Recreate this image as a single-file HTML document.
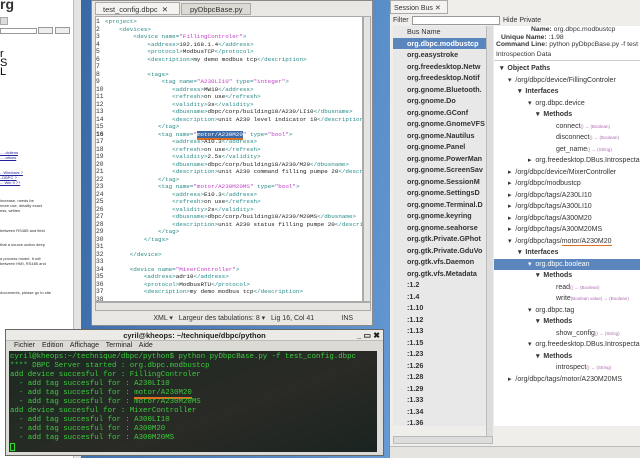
<!DOCTYPE html>
<html><head><meta charset="utf-8"><style>
*{margin:0;padding:0;box-sizing:border-box}
body{width:640px;height:458px;overflow:hidden;position:relative;background:#3a6ea8;font-family:"Liberation Sans",sans-serif;}
.abs{position:absolute}
.desk{left:0;top:0;width:640px;height:458px;background:linear-gradient(100deg,#2d5f9c 0%,#5f94cf 60%,#9ec3ea 100%)}
.browser{left:0;top:0;width:73px;height:458px;background:#fff;font-size:4px;color:#333;overflow:hidden}
.bscroll{left:73px;top:0;width:8px;height:458px;background:#e4e4e4;border-left:1px solid #bbb}
.ed{left:91px;top:0;width:282px;height:326px;background:#e9e7e3;border:1px solid #8a8a8a}
.code{left:95px;top:16px;width:268px;height:286px;background:#fff;border:1px solid #aaa;font-family:"Liberation Mono",monospace;font-size:5.9px;line-height:7.5px;overflow:hidden;white-space:pre;color:#222;padding-top:1px}
.ln{display:inline-block;width:9px;color:#333;font-size:6.3px}
.t{color:#2a8a8a}.s{color:#c23fc8}
.term{left:5px;top:329px;width:379px;height:127px;background:#dcdad5;border:1px solid #666}
.tc{left:9px;top:351px;width:369px;height:101px;background:linear-gradient(160deg,#1c2a22,#2a2a26 60%,#1a2420);font-family:"Liberation Mono",monospace;font-size:7.4px;line-height:9px;color:#3ccc3c;white-space:pre;overflow:hidden;padding:2px 0 0 1px}
.sb{left:389px;top:0;width:251px;height:458px;background:#efeeeb;border-left:1px solid #888}
.list{left:393px;top:26px;width:96px;height:400px;background:#e8e8e8;font-size:7.2px;font-weight:bold;line-height:11.5px;color:#333;overflow:hidden}
.list div{padding-left:14px;height:11.5px}
.rp{left:494px;top:26px;width:146px;height:400px;background:#fff;font-size:7px;line-height:11.5px;color:#333;white-space:nowrap;overflow:hidden}
.rp div{height:11.5px}
.sm{font-size:4.5px;color:#b06db0}
</style></head><body>
<div class="abs desk"></div>
<div class="abs browser">
<div style="font-size:14px;font-weight:bold;position:absolute;left:0;top:-4px">rg</div>
<div style="position:absolute;left:0;top:17px;width:8px;height:8px;background:#ddd;border:1px solid #aaa"></div>
<div style="position:absolute;left:0;top:28px;width:37px;height:6px;border:1px solid #999"></div>
<div style="position:absolute;left:38px;top:27px;width:15px;height:7px;border:1px solid #999;background:#eee"></div>
<div style="position:absolute;left:55px;top:27px;width:15px;height:7px;border:1px solid #999;background:#eee"></div>
<div style="position:absolute;left:0;top:50px;font-size:11px;line-height:9px;color:#000">r<br>S<br>L</div>
<div style="position:absolute;left:0;top:150px;color:#229;text-decoration:underline">.....dcliens<br>.....ations</div>
<div style="position:absolute;left:0;top:170px;color:#229;text-decoration:underline">.. Windows ?<br>..DBPC ?<br>... Win 9 ??</div>
<div style="position:absolute;left:0;top:198px">increase, needs be<br>more use, detailly exact<br>ess, written</div>
<div style="position:absolute;left:0;top:228px">between RS485 and field</div>
<div style="position:absolute;left:0;top:242px">that a source action deep</div>
<div style="position:absolute;left:0;top:256px">a process model. It will<br>between HMI, RS485 and</div>
<div style="position:absolute;left:0;top:290px">documents, please go to site</div>
</div>
<div class="abs bscroll"></div>
<div class="abs ed"></div>
<div class="abs" style="left:95px;top:2px;width:85px;height:13px;background:#f4f3f1;border:1px solid #aaa;font-size:7.5px;padding:2px 0 0 7px;color:#333">test_config.dbpc &nbsp;✕</div>
<div class="abs" style="left:181px;top:3px;width:70px;height:12px;background:#dcdad5;border:1px solid #aaa;font-size:7.5px;padding:1px 0 0 8px;color:#333">pyDbpcBase.py &nbsp;✕</div>
<div class="abs" style="left:96px;top:131px;width:266px;height:8px;background:#eeeeee"></div>
<div class="abs code"><span class="ln">1</span><span class="t">&lt;project&gt;</span>
<span class="ln">2</span>    <span class="t">&lt;devices&gt;</span>
<span class="ln">3</span>        <span class="t">&lt;device name=</span><span class="s">"FillingControler"</span><span class="t">&gt;</span>
<span class="ln">4</span>            <span class="t">&lt;address&gt;</span>192.168.1.4<span class="t">&lt;/address&gt;</span>
<span class="ln">5</span>            <span class="t">&lt;protocol&gt;</span>ModbusTCP<span class="t">&lt;/protocol&gt;</span>
<span class="ln">6</span>            <span class="t">&lt;description&gt;</span>my demo modbus tcp<span class="t">&lt;/description&gt;</span>
<span class="ln">7</span>
<span class="ln">8</span>            <span class="t">&lt;tags&gt;</span>
<span class="ln">9</span>                <span class="t">&lt;tag name=</span><span class="s">"A230LI10"</span> <span class="t">type=</span><span class="s">"integer"</span><span class="t">&gt;</span>
<span class="ln">10</span>                   <span class="t">&lt;address&gt;</span>MW10<span class="t">&lt;/address&gt;</span>
<span class="ln">11</span>                   <span class="t">&lt;refresh&gt;</span>on use<span class="t">&lt;/refresh&gt;</span>
<span class="ln">12</span>                   <span class="t">&lt;validity&gt;</span>3s<span class="t">&lt;/validity&gt;</span>
<span class="ln">13</span>                   <span class="t">&lt;dbusname&gt;</span>dbpc/corp/building18/A230/LI10<span class="t">&lt;/dbusname&gt;</span>
<span class="ln">14</span>                   <span class="t">&lt;description&gt;</span>unit A230 level indicator 10<span class="t">&lt;/description&gt;</span>
<span class="ln">15</span>               <span class="t">&lt;/tag&gt;</span>
<span class="ln"><b>16</b></span>               <span class="t">&lt;tag name=</span><span class="s">"<span style="background:#3a6aa8;color:#fff;border-bottom:2px solid #e07020">motor/A230M20</span>"</span> <span class="t">type=</span><span class="s">"bool"</span><span class="t">&gt;</span>
<span class="ln">17</span>                   <span class="t">&lt;address&gt;</span>A10.3<span class="t">&lt;/address&gt;</span>
<span class="ln">18</span>                   <span class="t">&lt;refresh&gt;</span>on use<span class="t">&lt;/refresh&gt;</span>
<span class="ln">19</span>                   <span class="t">&lt;validity&gt;</span>2.5s<span class="t">&lt;/validity&gt;</span>
<span class="ln">20</span>                   <span class="t">&lt;dbusname&gt;</span>dbpc/corp/building18/A230/M20<span class="t">&lt;/dbusname&gt;</span>
<span class="ln">21</span>                   <span class="t">&lt;description&gt;</span>unit A230 command filling pumpe 20<span class="t">&lt;/description&gt;</span>
<span class="ln">22</span>               <span class="t">&lt;/tag&gt;</span>
<span class="ln">23</span>               <span class="t">&lt;tag name=</span><span class="s">"motor/A230M20MS"</span> <span class="t">type=</span><span class="s">"bool"</span><span class="t">&gt;</span>
<span class="ln">24</span>                   <span class="t">&lt;address&gt;</span>E10.3<span class="t">&lt;/address&gt;</span>
<span class="ln">25</span>                   <span class="t">&lt;refresh&gt;</span>on use<span class="t">&lt;/refresh&gt;</span>
<span class="ln">26</span>                   <span class="t">&lt;validity&gt;</span>2s<span class="t">&lt;/validity&gt;</span>
<span class="ln">27</span>                   <span class="t">&lt;dbusname&gt;</span>dbpc/corp/building18/A230/M20MS<span class="t">&lt;/dbusname&gt;</span>
<span class="ln">28</span>                   <span class="t">&lt;description&gt;</span>unit A230 status filling pumpe 20<span class="t">&lt;/description&gt;</span>
<span class="ln">29</span>               <span class="t">&lt;/tag&gt;</span>
<span class="ln">30</span>           <span class="t">&lt;/tags&gt;</span>
<span class="ln">31</span>
<span class="ln">32</span>       <span class="t">&lt;/device&gt;</span>
<span class="ln">33</span>
<span class="ln">34</span>       <span class="t">&lt;device name=</span><span class="s">"MixerController"</span><span class="t">&gt;</span>
<span class="ln">35</span>           <span class="t">&lt;address&gt;</span>adr10<span class="t">&lt;/address&gt;</span>
<span class="ln">36</span>           <span class="t">&lt;protocol&gt;</span>ModbusRTU<span class="t">&lt;/protocol&gt;</span>
<span class="ln">37</span>           <span class="t">&lt;description&gt;</span>my demo modbus tcp<span class="t">&lt;/description&gt;</span>
<span class="ln">38</span></div>
<div class="abs" style="left:363px;top:16px;width:8px;height:286px;background:#e6e4e0;border:1px solid #aaa"></div>
<div class="abs" style="left:95px;top:302px;width:276px;height:9px;background:#e6e4e0;border:1px solid #aaa"></div>
<div class="abs" style="left:95px;top:312px;width:276px;height:12px;font-size:7px;color:#333;padding-top:2px;white-space:pre">                              XML ▾   Largeur des tabulations: 8 ▾   Lig 16, Col 41              INS</div>

<div class="abs term"></div>
<div class="abs" style="left:6px;top:330px;width:377px;height:11px;background:#eceae6;border-bottom:1px solid #bbb;font-size:7.5px;font-weight:bold;text-align:center;color:#222;line-height:11px">cyril@kheops: ~/technique/dbpc/python<span style="position:absolute;right:3px;font-size:8px">_ ▭ ✖</span></div>
<div class="abs" style="left:6px;top:341px;width:377px;height:10px;font-size:7px;color:#222;line-height:10px;padding-left:8px;word-spacing:5px">Fichier Edition Affichage Terminal Aide</div>
<div class="abs tc">cyril@kheops:~/technique/dbpc/python$ python pyDbpcBase.py -f test_config.dbpc
**** DBPC Server started : org.dbpc.modbustcp
add device succesful for : FillingControler
  - add tag succesful for : A230LI10
  - add tag succesful for : <span style="border-bottom:2px solid #e07020">motor/A230M20</span>
  - add tag succesful for : motor/A230M20MS
add device succesful for : MixerController
  - add tag succesful for : A300LI10
  - add tag succesful for : A300M20
  - add tag succesful for : A300M20MS
<span style="display:inline-block;width:5px;height:8px;border:1px solid #3d3"></span></div>
<div class="abs" style="left:377px;top:351px;width:6px;height:101px;background:#ddd"></div>

<div class="abs sb"></div>
<div class="abs" style="left:390px;top:0;width:58px;height:14px;border:1px solid #aaa;background:#f4f3f1;font-size:7px;padding:3px 0 0 3px;color:#333">Session Bus ✕</div>
<div class="abs" style="left:393px;top:17px;font-size:7px;color:#333">Filter</div>
<div class="abs" style="left:412px;top:16px;width:88px;height:9px;background:#fff;border:1px solid #999"></div>
<div class="abs" style="left:503px;top:17px;font-size:7px;color:#333">Hide Private</div>
<div class="abs list">
<div style="font-weight:normal">Bus Name</div>
<div style="background:#5a86bd;color:#fff">org.dbpc.modbustcp</div>
<div>org.easystroke</div><div>org.freedesktop.Netw</div><div>org.freedesktop.Notif</div><div>org.gnome.Bluetooth.</div><div>org.gnome.Do</div><div>org.gnome.GConf</div><div>org.gnome.GnomeVFS</div><div>org.gnome.Nautilus</div><div>org.gnome.Panel</div><div>org.gnome.PowerMan</div><div>org.gnome.ScreenSav</div><div>org.gnome.SessionM</div><div>org.gnome.SettingsD</div><div>org.gnome.Terminal.D</div><div>org.gnome.keyring</div><div>org.gnome.seahorse</div><div>org.gtk.Private.GPhot</div><div>org.gtk.Private.GduVo</div><div>org.gtk.vfs.Daemon</div><div>org.gtk.vfs.Metadata</div>
<div>:1.2</div><div>:1.4</div><div>:1.10</div><div>:1.12</div><div>:1.13</div><div>:1.15</div><div>:1.23</div><div>:1.26</div><div>:1.28</div><div>:1.29</div><div>:1.33</div><div>:1.34</div><div>:1.36</div><div>:1.38</div>
</div>
<div class="abs" style="left:486px;top:26px;width:7px;height:410px;background:#ddd;border-left:1px solid #bbb"></div>
<div class="abs" style="left:393px;top:436px;width:100px;height:8px;background:#ddd;border:1px solid #bbb"></div>
<div class="abs" style="left:390px;top:446px;width:250px;height:12px;background:#e6e4e0;border-top:1px solid #bbb"></div>
<div class="abs rp">
<div style="padding-left:2px;line-height:7.5px;height:23px;font-size:6.8px"><b style="margin-left:35px">Name:</b> org.dbpc.modbustcp<br><b style="margin-left:5px">Unique Name:</b> :1.98<br><b>Command Line:</b> python pyDbpcBase.py -f test</div>
<div style="padding-left:2px;height:12px;font-size:6.8px;border-bottom:1px solid #ccc">Introspection Data</div>
<div style="padding-left:6px;margin-top:2px"><b>▾ &nbsp;Object Paths</b></div>
<div style="padding-left:14px">▾ &nbsp;/org/dbpc/device/FillingControler</div>
<div style="padding-left:24px"><b>▾ &nbsp;Interfaces</b></div>
<div style="padding-left:34px">▾ &nbsp;org.dbpc.device</div>
<div style="padding-left:42px"><b>▾ &nbsp;Methods</b></div>
<div style="padding-left:62px">connect<span class="sm">() → (Boolean)</span></div>
<div style="padding-left:62px">disconnect<span class="sm">() → (Boolean)</span></div>
<div style="padding-left:62px">get_name<span class="sm">() → (String)</span></div>
<div style="padding-left:34px">▸ &nbsp;org.freedesktop.DBus.Introspectable</div>
<div style="padding-left:14px">▸ &nbsp;/org/dbpc/device/MixerController</div>
<div style="padding-left:14px">▸ &nbsp;/org/dbpc/modbustcp</div>
<div style="padding-left:14px">▸ &nbsp;/org/dbpc/tags/A230LI10</div>
<div style="padding-left:14px">▸ &nbsp;/org/dbpc/tags/A300LI10</div>
<div style="padding-left:14px">▸ &nbsp;/org/dbpc/tags/A300M20</div>
<div style="padding-left:14px">▸ &nbsp;/org/dbpc/tags/A300M20MS</div>
<div style="padding-left:14px">▾ &nbsp;/org/dbpc/tags/<span style="border-bottom:1px solid #e07020">motor/A230M20</span></div>
<div style="padding-left:24px"><b>▾ &nbsp;Interfaces</b></div>
<div style="padding-left:34px;background:#5a86bd;color:#fff">▾ &nbsp;org.dbpc.boolean</div>
<div style="padding-left:42px"><b>▾ &nbsp;Methods</b></div>
<div style="padding-left:62px">read<span class="sm">() → (Boolean)</span></div>
<div style="padding-left:62px">write<span class="sm">(Boolean value) → (Boolean)</span></div>
<div style="padding-left:34px">▾ &nbsp;org.dbpc.tag</div>
<div style="padding-left:42px"><b>▾ &nbsp;Methods</b></div>
<div style="padding-left:62px">show_config<span class="sm">() → (String)</span></div>
<div style="padding-left:34px">▾ &nbsp;org.freedesktop.DBus.Introspectable</div>
<div style="padding-left:42px"><b>▾ &nbsp;Methods</b></div>
<div style="padding-left:62px">introspect<span class="sm">() → (String)</span></div>
<div style="padding-left:14px">▸ &nbsp;/org/dbpc/tags/motor/A230M20MS</div>
</div>
</body></html>
